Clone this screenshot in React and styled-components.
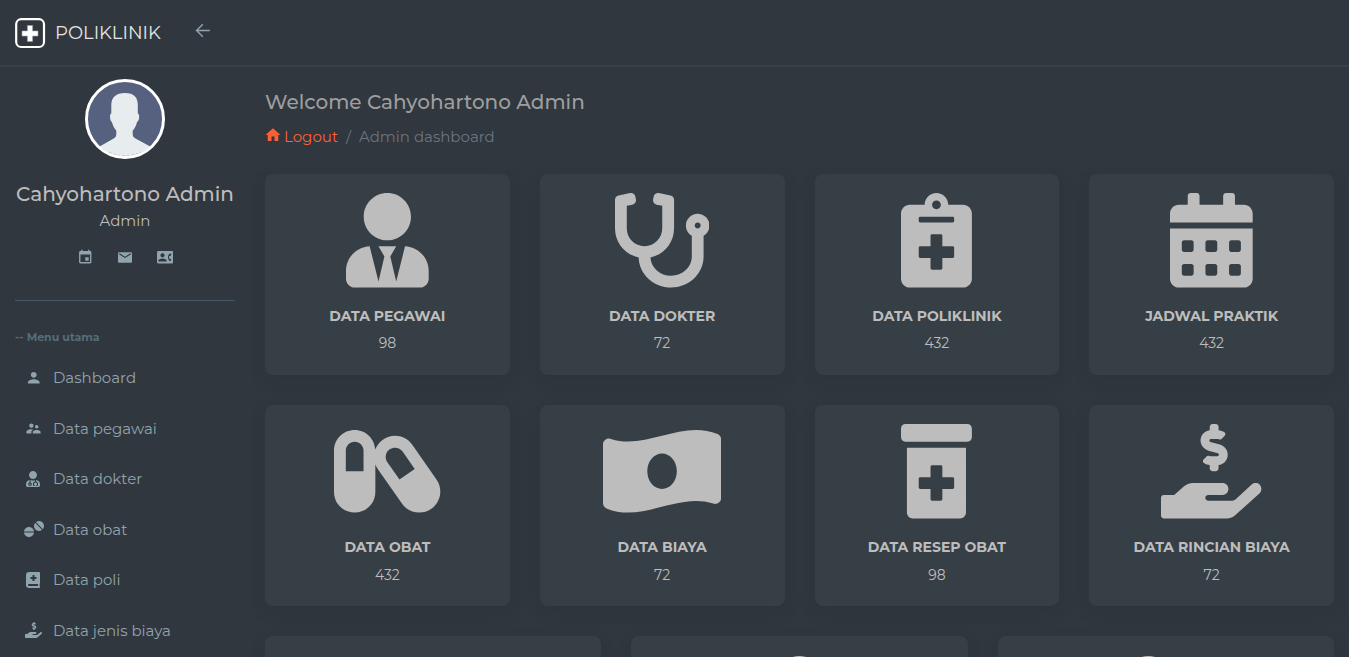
import React from 'react';
import styled, { createGlobalStyle } from 'styled-components';
import {
  FaUserTie, FaStethoscope, FaNotesMedical, FaCalendarAlt, FaCapsules,
  FaPrescriptionBottleAlt, FaUserMd, FaTablets, FaBookMedical, FaUser, FaUserCog,
} from 'react-icons/fa';
import { MdHome, MdEvent, MdContactPhone, MdPerson, MdSupervisorAccount } from 'react-icons/md';

const GlobalStyle = createGlobalStyle`
  * { box-sizing: border-box; }
  body {
    margin: 0;
    background: #30373e;
    color: #bdbdbd;
    font-family: Montserrat, Inter, sans-serif;
    overflow: hidden;
  }
`;

const Page = styled.div`
  height: 657px;
  overflow: hidden;
  display: flex;
  flex-direction: column;
  white-space: nowrap;
`;

const Header = styled.header`
  flex: none;
  height: 67px;
  padding: 0 15px;
  display: flex;
  align-items: center;
  border-bottom: 2px solid #394149;
`;

const Brand = styled.div`
  width: 179.5px;
  display: flex;
  align-items: center;
  gap: 9px;
  font-size: 18px;
  color: #e4e4e4;
`;

const BackButton = styled.button`
  display: flex;
  padding: 0 0 4px;
  border: 0;
  background: none;
  color: #90a4ae;
`;

const Body = styled.div`
  flex: 1;
  min-height: 0;
  display: flex;
`;

const Sidebar = styled.aside`
  flex: none;
  width: 250px;
  padding: 12px 15px 0;
`;

const Profile = styled.section`
  display: flex;
  flex-direction: column;
  align-items: center;
  height: 222px;
  border-bottom: 1px solid #455a64;
`;

const Name = styled.div`
  margin-top: 22px;
  font-size: 20px;
  font-weight: 500;
  line-height: 26px;
`;

const Role = styled.div`
  margin-top: 2px;
  font-size: 15px;
  line-height: 24px;
`;

const QuickLinks = styled.div`
  display: flex;
  margin-top: 14px;
  color: #90a4ae;
`;

const QuickLink = styled.a`
  width: 40px;
  height: 20px;
  display: flex;
  align-items: center;
  justify-content: center;
  font-size: 16.5px;
`;

const MenuTitle = styled.div`
  margin-top: 26px;
  font-size: 11px;
  font-weight: 700;
  line-height: 20px;
  color: #546e7a;
`;

const Menu = styled.nav`
  padding: 5.4px 0 0 9.4px;
`;

const MenuItem = styled.a`
  height: 50.5px;
  display: flex;
  align-items: center;
  gap: 10.6px;
  font-size: 15px;
  color: #90a4ae;
`;

const MenuIcon = styled.span`
  width: 18px;
  display: flex;
  align-items: center;
  justify-content: safe center;
  svg {
    flex: none;
    width: auto;
    height: ${(p) => p.$size}px;
  }
`;

const Main = styled.main`
  flex: 1;
  padding: 22px 15px 0;
`;

const Welcome = styled.h1`
  margin: 0;
  font-size: 20px;
  font-weight: 500;
  line-height: 26px;
  color: #9e9e9e;
`;

const Crumbs = styled.div`
  display: flex;
  align-items: center;
  height: 24px;
  margin-top: 9px;
  font-size: 15px;
  color: #6c757d;
`;

const CrumbLink = styled.a`
  display: flex;
  align-items: center;
  gap: 2.5px;
  color: #ff5f35;
  svg {
    margin: -3px 0 0 -1.5px;
    font-size: 18px;
  }
`;

const Slash = styled.span`
  margin: 0 8px;
`;

const Rows = styled.div`
  display: flex;
  flex-direction: column;
  gap: 30px;
  margin-top: 26.1px;
`;

const CardRow = styled.div`
  display: grid;
  grid-template-columns: repeat(${(p) => p.$columns}, 1fr);
  gap: 30px;
`;

const Card = styled.article`
  height: 201.17px;
  padding-top: 19.2px;
  display: flex;
  flex-direction: column;
  align-items: center;
  border-radius: 8px;
  background: #373f46;
  box-shadow: 0 6px 14px rgba(41, 48, 54, 0.3);
  > svg {
    width: auto;
    height: 94.5px;
  }
`;

const CardTitle = styled.div`
  margin-top: 16.3px;
  font-size: 14px;
  font-weight: 700;
  line-height: 24px;
`;

const CardCount = styled.div`
  margin-top: 3.35px;
  font-size: 14px;
  line-height: 24px;
`;

const Logo = () => (
  <svg width="31" height="32" viewBox="0 0 31 32" fill="none">
    <rect x="1.2" y="2.2" width="27.8" height="27.8" rx="5" stroke="#fff" strokeWidth="2.2" />
    <path d="M12.400 8.500h5.200v5.400h5.400v5.200h-5.400v5.400h-5.200v-5.400H7v-5.200h5.400z" fill="#fff" stroke="#9a9da0" strokeWidth=".6" />
  </svg>
);

const BackArrow = () => (
  <svg width="16" height="15" viewBox="0 0 16 15" fill="none" stroke="currentColor" strokeWidth="1.4">
    <path d="M14.800 7.500H1.600M7.800 1.200 1.500 7.500l6.300 6.300" />
  </svg>
);

const Avatar = () => (
  <svg width="80" height="80" viewBox="0 0 80 80">
    <clipPath id="face"><circle cx="40" cy="40" r="37.5" /></clipPath>
    <circle cx="40" cy="40" r="38.5" fill="#56617f" />
    <path
      clipPath="url(#face)"
      fill="#e7edee"
      d="M40 14c-9 0-13.700 4.400-13.700 12v8.500c-1.300.4-1.400 2-1.100 5 .2 2 .8 3 1.700 3.400C27.700 46.500 29.600 49.500 31.300 51.500V55c0 2.300-.5 3.300-2.600 4.500L12 69v12h56V69L50.500 59.500c-2.100-1.200-2.800-2.200-2.800-4.500v-3.500c2-2 3.600-5.200 4.300-8.600 1-.4 1.700-1.400 2-3.400.3-3 .1-4.600-1.200-5V26c0-7.600-3.800-12-12.800-12z"
    />
    <path d="M24 73.200A37 37 0 0 0 56 73.200" fill="none" stroke="#8d9498" strokeWidth=".7" strokeDasharray="3 1.500" />
    <circle cx="40" cy="40" r="38.500" fill="none" stroke="#fff" strokeWidth="3" />
  </svg>
);

const Mail = () => (
  <svg width="14" height="11" viewBox="0 0 14 11">
    <rect width="14" height="10.400" y=".3" rx="1.200" fill="currentColor" />
    <path d="M1.300 1.800 7 5.400l5.700-3.600" fill="none" stroke="#30373e" strokeWidth="1.200" />
  </svg>
);

const Banknote = () => (
  <svg viewBox="0 0 640 512" fill="currentColor">
    <path d="M621.160 54.460C582.370 38.190 543.550 32 504.750 32c-123.170-.01-246.330 62.340-369.500 62.340-30.890 0-61.760-3.920-92.650-13.720-3.470-1.100-6.950-1.620-10.350-1.620C15.040 79 0 92.320 0 110.810v317.260c0 12.630 7.230 24.600 18.840 29.460C57.630 473.810 96.450 480 135.250 480c123.170 0 246.340-62.350 369.510-62.350 30.890 0 61.760 3.920 92.650 13.720 3.470 1.100 6.950 1.620 10.350 1.620 17.210 0 32.250-13.320 32.250-31.810V83.930c-.01-12.640-7.240-24.600-18.850-29.470zM320 352c-44.190 0-80-42.990-80-96 0-53.020 35.820-96 80-96s80 42.980 80 96c0 53.030-35.830 96-80 96z" />
  </svg>
);

const HandDollar = () => (
  <svg viewBox="0 0 544 512" fill="currentColor">
    <path d="M257.600 144.300l50 14.300c3.600 1 6.100 4.400 6.100 8.100 0 4.600-3.800 8.400-8.400 8.400h-32.800c-3.600 0-7.100-.8-10.300-2.200-4.800-2.200-10.400-1.700-14.100 2l-17.500 17.500c-5.300 5.300-4.700 14.300 1.500 18.400 9.500 6.300 20.400 10.100 31.800 11.500V240c0 8.800 7.200 16 16 16h16c8.800 0 16-7.200 16-16v-17.600c30.300-3.600 53.300-31 49.300-63-2.900-23-20.700-41.300-42.900-47.700l-50-14.300c-3.600-1-6.100-4.400-6.100-8.100 0-4.600 3.800-8.400 8.400-8.400h32.800c3.600 0 7.100.8 10.300 2.200 4.800 2.200 10.400 1.700 14.100-2l17.500-17.500c5.300-5.300 4.700-14.300-1.500-18.400-9.500-6.300-20.400-10.100-31.800-11.500V16c0-8.800-7.200-16-16-16h-16c-8.800 0-16 7.200-16 16v17.600c-30.300 3.600-53.300 31-49.300 63 2.900 23 20.700 41.300 42.900 47.700z" />
    <path d="M533.900 328.100c-11.800-10.700-30.200-10-42.600 0L409.400 403c-9 8-18 13-30 13H256c-8.800 0-16-7.200-16-16s7.200-16 16-16h78.300c16 0 27.800-11 30.400-26.700 3.300-20-12.100-37.300-31.600-37.300H176c-22 0-40 8-54 20l-50.600 44H16c-8.800 0-16 7.200-16 16v96c0 8.800 7.200 16 16 16h342c14.500 0 28-4 39-13L536 374c10-12 11-32-2.100-45.900z" />
  </svg>
);

const menu = [
  { label: 'Dashboard', icon: MdPerson, size: 17.5 },
  { label: 'Data pegawai', icon: MdSupervisorAccount, size: 17 },
  { label: 'Data dokter', icon: FaUserMd, size: 16 },
  { label: 'Data obat', icon: FaTablets, size: 16 },
  { label: 'Data poli', icon: FaBookMedical, size: 16 },
  { label: 'Data jenis biaya', icon: HandDollar, size: 16 },
];

const rows = [
  [
    { title: 'DATA PEGAWAI', count: '98', icon: FaUserTie },
    { title: 'DATA DOKTER', count: '72', icon: FaStethoscope },
    { title: 'DATA POLIKLINIK', count: '432', icon: FaNotesMedical },
    { title: 'JADWAL PRAKTIK', count: '432', icon: FaCalendarAlt },
  ],
  [
    { title: 'DATA OBAT', count: '432', icon: FaCapsules },
    { title: 'DATA BIAYA', count: '72', icon: Banknote },
    { title: 'DATA RESEP OBAT', count: '98', icon: FaPrescriptionBottleAlt },
    { title: 'DATA RINCIAN BIAYA', count: '72', icon: HandDollar },
  ],
  [{ icon: Banknote }, { icon: FaUser }, { icon: FaUserCog }],
];

export default function App() {
  return (
    <Page>
      <GlobalStyle />
      <Header>
        <Brand>
          <Logo />
          POLIKLINIK
        </Brand>
        <BackButton aria-label="Back"><BackArrow /></BackButton>
      </Header>
      <Body>
        <Sidebar>
          <Profile>
            <Avatar />
            <Name>Cahyohartono Admin</Name>
            <Role>Admin</Role>
            <QuickLinks>
              <QuickLink><MdEvent /></QuickLink>
              <QuickLink><Mail /></QuickLink>
              <QuickLink><MdContactPhone /></QuickLink>
            </QuickLinks>
          </Profile>
          <MenuTitle>-- Menu utama</MenuTitle>
          <Menu>
            {menu.map(({ label, icon: Icon, size }) => (
              <MenuItem key={label}>
                <MenuIcon $size={size}><Icon size="100%" /></MenuIcon>
                {label}
              </MenuItem>
            ))}
          </Menu>
        </Sidebar>
        <Main>
          <Welcome>Welcome Cahyohartono Admin</Welcome>
          <Crumbs>
            <CrumbLink><MdHome />Logout</CrumbLink>
            <Slash>/</Slash>
            Admin dashboard
          </Crumbs>
          <Rows>
            {rows.map((cards, r) => (
              <CardRow key={r} $columns={cards.length}>
                {cards.map(({ title, count, icon: Icon }, c) => (
                  <Card key={c}>
                    <Icon size="100%" />
                    {title && <CardTitle>{title}</CardTitle>}
                    {count && <CardCount>{count}</CardCount>}
                  </Card>
                ))}
              </CardRow>
            ))}
          </Rows>
        </Main>
      </Body>
    </Page>
  );
}
